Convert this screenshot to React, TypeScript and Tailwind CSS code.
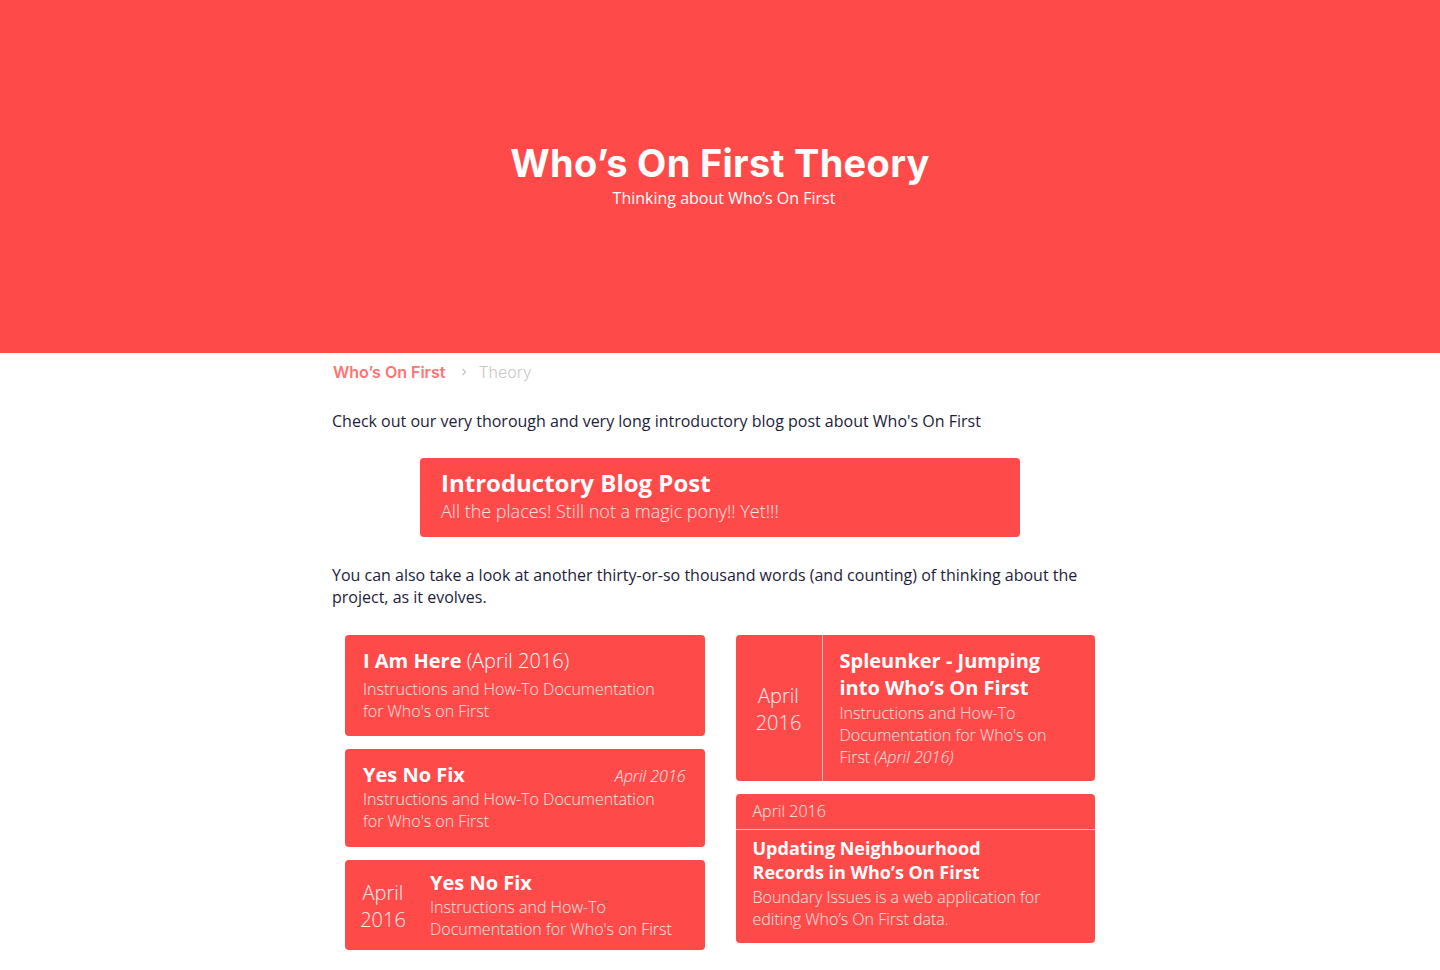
const sans = "font-['Open_Sans',_'Liberation_Sans',_sans-serif]";
const display = "font-['Inter',_'Noto_Sans',_sans-serif]";

const desc =
  "Instructions and How-To Documentation for Who's on First";

export default function App() {
  return (
    <div className={`${sans} bg-white min-h-[970px] text-[#1e1c3b]`}>
      <header className="h-[353px] bg-[#ff4a4a] flex flex-col items-center justify-center pb-[4px]">
        <h1
          className={`${display} text-white font-bold text-[38px] leading-[44px] tracking-[0.3px]`}
        >
          Who’s On First Theory
        </h1>
        <p className="text-white text-[16px] leading-[22px] mt-[2px] pl-[8px]">
          Thinking about Who’s On First
        </p>
      </header>

      <main className="w-[776px] mx-auto pt-[8px]">
        <nav className={`${display} flex items-center text-[16px] leading-[22px] pl-[1px]`}>
          <span className="font-semibold text-[#ff7373]">Who’s On First</span>
          <svg
            className="ml-[13px] mr-[8px]"
            width="12"
            height="12"
            viewBox="0 0 12 12"
            fill="none"
            stroke="#c4c4c4"
            strokeWidth="1.2"
          >
            <path d="M4.5 3 L7.5 6 L4.5 9" />
          </svg>
          <span className="font-light text-[#c8c8c8]">Theory</span>
        </nav>

        <p className="mt-[27px] text-[16px] leading-[22px]">
          Check out our very thorough and very long introductory blog post about
          Who's On First
        </p>

        <a className="block w-[600px] mx-auto mt-[26px] bg-[#ff4a4a] rounded-[4px] px-[21px] pt-[9px] pb-[14px] text-white">
          <div className="font-bold text-[24px] leading-[32px]">
            Introductory Blog Post
          </div>
          <div className="font-light text-[18px] leading-[24px] text-white/85">
            All the places! Still not a magic pony!! Yet!!!
          </div>
        </a>

        <p className="mt-[27px] text-[16px] leading-[22px]">
          You can also take a look at another thirty-or-so thousand words (and
          counting) of thinking about the project, as it evolves.
        </p>

        <div className="grid grid-cols-2 gap-x-[31px] px-[13px] mt-[27px] items-start">
          <div className="flex flex-col gap-[13px]">
            <div className="bg-[#ff4a4a] rounded-[4px] pl-[18px] pr-[40px] pt-[12px] pb-[14px] text-white">
              <div className="text-[20px] leading-[28px]">
                <span className="font-bold">I Am Here</span>{" "}
                <span className="font-light">(April 2016)</span>
              </div>
              <div className="font-light text-[16px] leading-[22px] text-white/85 mt-[3px]">
                {desc}
              </div>
            </div>

            <div className="bg-[#ff4a4a] rounded-[4px] pl-[18px] pr-[19px] pt-[12px] pb-[15px] text-white">
              <div className="flex items-baseline justify-between">
                <span className="font-bold text-[20px] leading-[28px]">
                  Yes No Fix
                </span>
                <span className="font-light italic text-[16px] text-white/90">
                  April 2016
                </span>
              </div>
              <div className="font-light text-[16px] leading-[22px] text-white/85 pr-[22px] mt-[-1px]">
                {desc}
              </div>
            </div>

            <div className="bg-[#ff4a4a] rounded-[4px] flex text-white">
              <div className="w-[76px] shrink-0 flex items-center justify-center text-center font-light text-[20px] leading-[27px] text-white/90 pt-[2px]">
                April
                <br />
                2016
              </div>
              <div className="pl-[9px] pr-[18px] pt-[9px] pb-[10px]">
                <div className="font-bold text-[20px] leading-[27px]">
                  Yes No Fix
                </div>
                <div className="font-light text-[16px] leading-[22px] text-white/85">
                  {desc}
                </div>
              </div>
            </div>
          </div>

          <div className="flex flex-col gap-[13px]">
            <div className="bg-[#ff4a4a] rounded-[4px] flex text-white">
              <div className="w-[87px] shrink-0 border-r border-white/60 flex items-center justify-center text-center font-light text-[20px] leading-[27px] text-white/90 pt-[2px]">
                April
                <br />
                2016
              </div>
              <div className="pl-[17px] pr-[20px] pt-[12px] pb-[13px]">
                <div className="font-bold text-[20px] leading-[27px]">
                  Spleunker - Jumping into Who’s On First
                </div>
                <div className="font-light text-[16px] leading-[22px] text-white/85 mt-[1px]">
                  Instructions and How-To Documentation for Who's on First{" "}
                  <span className="italic">(April 2016)</span>
                </div>
              </div>
            </div>

            <div className="bg-[#ff4a4a] rounded-[4px] text-white">
              <div className="px-[17px] pt-[5px] pb-[6px] border-b border-white/60 font-light text-[16px] leading-[24px] text-white/90">
                April 2016
              </div>
              <div className="px-[17px] pt-[6px] pb-[13px]">
                <div className="font-bold text-[18px] leading-[24px] pr-[60px]">
                  Updating Neighbourhood Records in Who’s On First
                </div>
                <div className="font-light text-[16px] leading-[22px] text-white/85 mt-[2px] pr-[20px]">
                  Boundary Issues is a web application for editing Who’s On
                  First data.
                </div>
              </div>
            </div>
          </div>
        </div>
        <div className="h-[20px]" />
      </main>
    </div>
  );
}
